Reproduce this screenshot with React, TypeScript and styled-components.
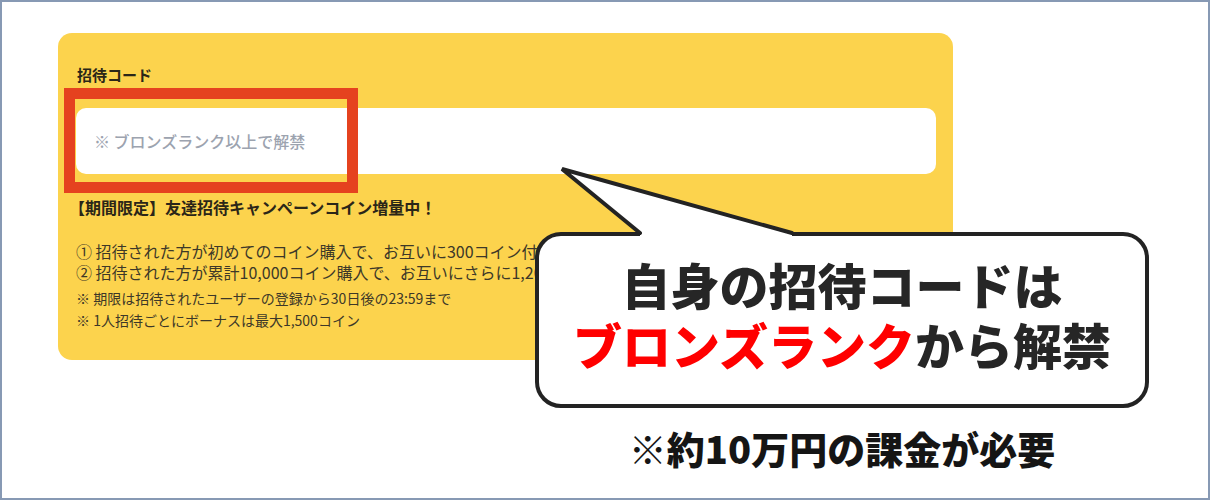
import styled, { createGlobalStyle } from 'styled-components'

const GlobalStyle = createGlobalStyle`
  body {
    margin: 0;
    background: #ffffff;
    font-family: "Noto Sans CJK JP", "Noto Sans", sans-serif;
  }
`

export default function App() {
  return (
    <>
      <GlobalStyle />
      <Frame>
        <Card>
          <FieldLabel>招待コード</FieldLabel>
          <CodeField>
            <CodeInput placeholder="※ ブロンズランク以上で解禁" disabled />
            <Highlight />
          </CodeField>

          <CampaignTitle>【期間限定】友達招待キャンペーンコイン増量中！</CampaignTitle>
          <RuleList>
            <Rule>① 招待された方が初めてのコイン購入で、お互いに300コイン付与</Rule>
            <Rule>② 招待された方が累計10,000コイン購入で、お互いにさらに1,200コイン付与</Rule>
          </RuleList>
          <NoteList>
            <Note>※ 期限は招待されたユーザーの登録から30日後の23:59まで</Note>
            <Note>※ 1人招待ごとにボーナスは最大1,500コイン</Note>
          </NoteList>
        </Card>

        <Annotation>
          <Bubble>
            <Tail viewBox="0 0 250 85" width="250" height="85">
              <polygon points="10,9 88,73 88,79 240,79 240,73" fill="#ffffff" />
              <polyline
                points="88,73 10,9 240,73"
                fill="none"
                stroke="#232323"
                strokeWidth="4"
                strokeLinejoin="miter"
                strokeLinecap="round"
              />
            </Tail>
            <BubbleLine>自身の招待コードは</BubbleLine>
            <BubbleLine>
              <Accent>ブロンズランク</Accent>から解禁
            </BubbleLine>
          </Bubble>
          <Caution>※約10万円の課金が必要</Caution>
        </Annotation>
      </Frame>
    </>
  )
}

const Frame = styled.div`
  position: relative;
  width: 1210px;
  height: 500px;
  box-sizing: border-box;
  border: 2px solid #8799b4;
  background: #ffffff;
  overflow: hidden;
`

const Card = styled.section`
  width: 895px;
  height: 327px;
  margin: 31px 0 0 56px;
  box-sizing: border-box;
  padding: 31px 17px 0 18px;
  border-radius: 14px;
  background: #fcd34d;
  color: #2b2618;
`

const FieldLabel = styled.div`
  font-size: 15px;
  line-height: 22px;
  font-weight: 700;
  padding-left: 1px;
`

const CodeField = styled.div`
  position: relative;
  margin-top: 22px;
`

const CodeInput = styled.input`
  display: block;
  width: 100%;
  height: 66px;
  box-sizing: border-box;
  padding: 0 18px;
  border: none;
  border-radius: 10px;
  background: #ffffff;
  font-family: inherit;
  font-size: 16px;
  font-weight: 500;

  &::placeholder {
    color: #9ca3af;
    opacity: 1;
  }
`

const Highlight = styled.div`
  position: absolute;
  left: -12px;
  top: -20px;
  width: 294px;
  height: 105px;
  box-sizing: border-box;
  border: 11px solid #e5421f;
  pointer-events: none;
`

const CampaignTitle = styled.div`
  margin-top: 21px;
  font-size: 16px;
  line-height: 24px;
  font-weight: 700;
  text-indent: -7px;
  white-space: nowrap;
`

const RuleList = styled.div`
  margin-top: 22px;
  display: flex;
  flex-direction: column;
`

const Rule = styled.div`
  font-size: 16px;
  line-height: 21px;
  color: #3d3828;
  white-space: nowrap;
`

const NoteList = styled.div`
  margin-top: 4px;
  display: flex;
  flex-direction: column;
`

const Note = styled.div`
  font-size: 14px;
  line-height: 22px;
  color: #3d3828;
  white-space: nowrap;
`

const Annotation = styled.div`
  position: absolute;
  left: 533px;
  top: 230px;
  width: 614px;
  display: flex;
  flex-direction: column;
  align-items: center;
`

const Bubble = styled.div`
  position: relative;
  width: 100%;
  height: 176px;
  box-sizing: border-box;
  padding-bottom: 12px;
  border: 4px solid #232323;
  border-radius: 26px;
  background: #ffffff;
  display: flex;
  flex-direction: column;
  align-items: center;
  justify-content: center;
`

const Tail = styled.svg`
  position: absolute;
  left: 13px;
  top: -76px;
  overflow: visible;
`

const BubbleLine = styled.div`
  font-size: 49px;
  line-height: 60px;
  font-weight: 900;
  color: #262626;
  white-space: nowrap;
`

const Accent = styled.span`
  color: #ff0000;
`

const Caution = styled.div`
  margin-top: 18px;
  font-size: 38px;
  line-height: 44px;
  font-weight: 900;
  color: #151515;
  white-space: nowrap;
`
